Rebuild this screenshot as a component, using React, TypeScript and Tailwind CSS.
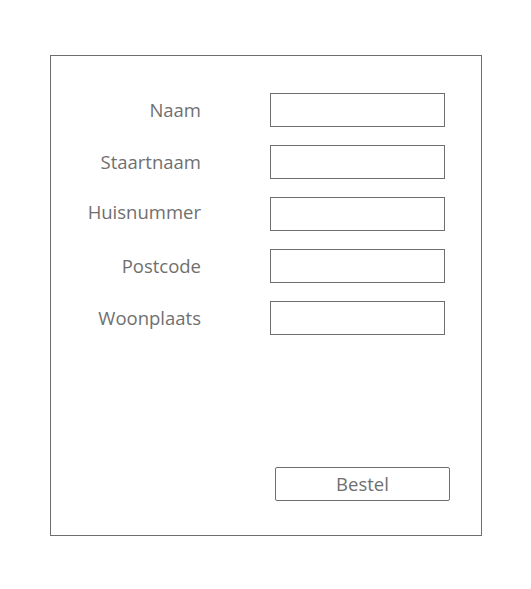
import React from 'react';

const fields = ['Naam', 'Staartnaam', 'Huisnummer', 'Postcode', 'Woonplaats'];

export default function App() {
  return (
    <div className="w-[531px] h-[589px] bg-white pt-[55px] pl-[50px]" style={{ fontFamily: '"Open Sans", "Noto Sans", sans-serif' }}>
      <div className="w-[432px] h-[481px] border border-[#6e6e6e] flex flex-col pt-[37px]">
        <div className="flex flex-col gap-[18px]">
          {fields.map((f) => (
            <div key={f} className="flex items-center h-[34px]">
              <label className={`w-[150px] text-right text-[18.5px] text-[#6f6f6f] leading-none ${f === 'Huisnummer' ? '-mt-[4px]' : ''}`}>{f}</label>
              <input className="ml-[69px] w-[175px] h-[34px] border border-[#6e6e6e] outline-none" />
            </div>
          ))}
        </div>
        <button className="ml-[224px] mt-[132px] w-[175px] h-[34px] border border-[#6e6e6e] rounded-[2px] text-[18.5px] text-[#6f6f6f]">
          Bestel
        </button>
      </div>
    </div>
  );
}
